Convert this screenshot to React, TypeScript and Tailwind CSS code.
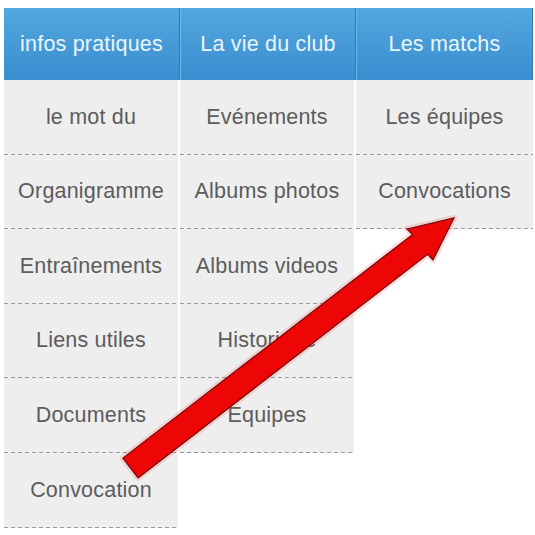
import * as React from 'react';

const columns = [
  {
    title: 'infos pratiques',
    items: ['le mot du', 'Organigramme', 'Entraînements', 'Liens utiles', 'Documents', 'Convocation'],
  },
  {
    title: 'La vie du club',
    items: ['Evénements', 'Albums photos', 'Albums videos', 'Historique', 'Equipes'],
  },
  {
    title: 'Les matchs',
    items: ['Les équipes', 'Convocations'],
  },
];

function Arrow() {
  const pts =
    '122.9,458.1 412.4,234.6 407,229 454,218 433,260 427.6,254.4 138.1,477.9';
  return (
    <svg className="absolute inset-0 pointer-events-none" width="535" height="535" viewBox="0 0 535 535">
      {/* soft halo, the screenshot has a pinkish fringe round the arrow */}
      <polygon points={pts} fill="none" stroke="#ff3b3b" strokeOpacity="0.18" strokeWidth="6" strokeLinejoin="round" />
      <polygon points={pts} fill="#ee0606" stroke="#6e0a0a" strokeWidth="1.2" strokeLinejoin="miter" />
    </svg>
  );
}

export default function App() {
  return (
    <div className="relative w-[535px] h-[535px] bg-white overflow-hidden pt-[8px] pl-[4px] font-[family-name:'Liberation_Sans',Arial,sans-serif]">
      <div className="flex">
        {columns.map((col, i) => (
          <div key={col.title} className={i === 2 ? 'w-[177px] flex flex-col' : 'w-[176px] flex flex-col'}>
            {/* Header */}
            <div
              className={
                'h-[72px] flex items-center justify-center bg-gradient-to-b from-[#52a8df] to-[#3a8dcf] text-[#eaf5fc] text-[21.5px] tracking-[0.2px] border-r border-r-[#2f7ab9] ' +
                (i > 0 ? 'border-l border-l-[#6cb8e8]' : '')
              }
            >
              {col.title}
            </div>

            {/* Items */}
            <div className={i < 2 ? 'mr-[2px]' : ''}>
              {col.items.map((item) => (
                <div key={item} className="h-[74.6px] flex flex-col bg-[#eeeeee]">
                  <div className="flex-1 flex items-center justify-center text-[21.5px] tracking-[0.2px] text-[#5c5c5c]">{item}</div>
                  <div className="h-px bg-[repeating-linear-gradient(to_right,#9a9a9a_0_4px,transparent_4px_7px)]" />
                </div>
              ))}
            </div>
          </div>
        ))}
      </div>

      <Arrow />
    </div>
  );
}
